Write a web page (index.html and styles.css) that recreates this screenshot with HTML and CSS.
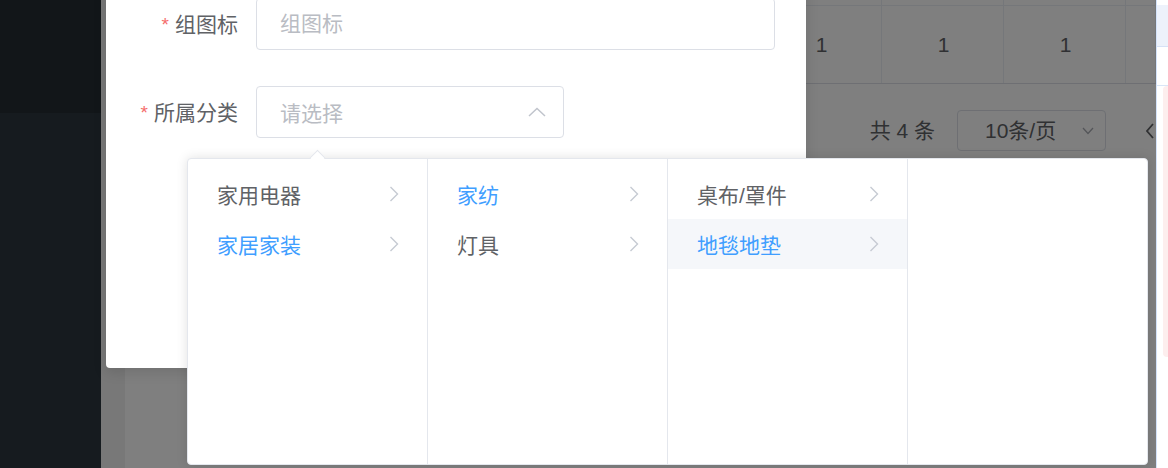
FILE: index.html
```html
<!DOCTYPE html>
<html lang="zh-CN">
<head>
  <meta charset="UTF-8">
  <title>分组管理</title>
  <link rel="stylesheet" href="styles.css">
</head>
<body>
<div class="app">
  <aside class="sidebar"><div class="sidebar-head"></div></aside>

  <main class="main">
    <div class="content">
      <div class="table">
        <div class="tr th">
          <div class="td"></div><div class="td"></div><div class="td"></div><div class="td"></div><div class="td"></div>
        </div>
        <div class="tr">
          <div class="td"></div><div class="td">1</div><div class="td">1</div><div class="td">1</div><div class="td"></div>
        </div>
      </div>
      <div class="pager">
        <span class="total">共 4 条</span>
        <div class="sizes">
          <span>10条/页</span>
          <svg width="12" height="8" viewBox="0 0 12 8"><polyline points="1,1 6,6.5 11,1" fill="none" stroke="#a8abb2" stroke-width="1.3"/></svg>
        </div>
        <button class="prev">
          <svg width="8" height="16" viewBox="0 0 8 16"><polyline points="7,1 1,8 7,15" fill="none" stroke="#606266" stroke-width="1.8"/></svg>
        </button>
      </div>
    </div>
    <!-- 弹窗遮罩 -->
    <div class="mask"></div>
  </main>

  <div class="edge">
    <div class="edge-band"></div>
    <div class="edge-row"></div>
    <div class="edge-alert"></div>
  </div>
</div>

<!-- 添加分组弹窗 -->
<div class="dialog">
  <div class="form-item">
    <label class="label"><span class="req">*</span>组图标</label>
    <input class="input" placeholder="组图标">
  </div>
  <div class="form-item">
    <label class="label"><span class="req">*</span>所属分类</label>
    <div class="select">
      <span class="placeholder">请选择</span>
      <svg width="18" height="10" viewBox="0 0 18 10"><polyline points="1,9 9,1.5 17,9" fill="none" stroke="#c0c4cc" stroke-width="1.5"/></svg>
    </div>
  </div>
</div>

<!-- 级联下拉 -->
<div class="cascader">
  <span class="popper-arrow"></span>
  <ul class="menu">
    <li class="node">家用电器<svg class="chev" width="10" height="16" viewBox="0 0 10 16"><polyline points="1.5,1 8.5,8 1.5,15" fill="none" stroke="#c6cbd3" stroke-width="1.4"/></svg></li>
    <li class="node active">家居家装<svg class="chev" width="10" height="16" viewBox="0 0 10 16"><polyline points="1.5,1 8.5,8 1.5,15" fill="none" stroke="#c6cbd3" stroke-width="1.4"/></svg></li>
  </ul>
  <ul class="menu">
    <li class="node active">家纺<svg class="chev" width="10" height="16" viewBox="0 0 10 16"><polyline points="1.5,1 8.5,8 1.5,15" fill="none" stroke="#c6cbd3" stroke-width="1.4"/></svg></li>
    <li class="node">灯具<svg class="chev" width="10" height="16" viewBox="0 0 10 16"><polyline points="1.5,1 8.5,8 1.5,15" fill="none" stroke="#c6cbd3" stroke-width="1.4"/></svg></li>
  </ul>
  <ul class="menu">
    <li class="node">桌布/罩件<svg class="chev" width="10" height="16" viewBox="0 0 10 16"><polyline points="1.5,1 8.5,8 1.5,15" fill="none" stroke="#c6cbd3" stroke-width="1.4"/></svg></li>
    <li class="node active hover">地毯地垫<svg class="chev" width="10" height="16" viewBox="0 0 10 16"><polyline points="1.5,1 8.5,8 1.5,15" fill="none" stroke="#c6cbd3" stroke-width="1.4"/></svg></li>
  </ul>
  <ul class="menu last"></ul>
</div>
</body>
</html>
```

FILE: styles.css
```css
    body {
      margin: 0;
      width: 1168px;
      height: 468px;
      overflow: hidden;
      font-family: "Liberation Sans", "Noto Sans CJK SC", sans-serif;
      color: #606266;
    }
    .app {
      display: flex;
      height: 468px;
    }
    .sidebar {
      width: 101px;
      flex: none;
      background: #161b1f;
    }
    .sidebar-head {
      height: 113px;
      background: #121619;
    }
    .main {
      flex: 1;
      position: relative;
      display: flex;
      padding-left: 24px;
      background: #f0f0f0;
      overflow: hidden;
    }
    .content {
      flex: 1;
      background: #fff;
    }
    .mask {
      position: absolute;
      top: 0;
      left: 0;
      right: 0;
      bottom: 0;
      background: rgba(0, 0, 0, 0.5);
    }

    /* 表格 */
    .table {
      margin-top: -43px;
    }
    .tr {
      display: grid;
      grid-template-columns: 635px 122px 122px 122px 1fr;
      height: 77px;
      border-bottom: 1px solid #dcdfe6;
    }
    .tr.th {
      height: 48px;
      border-bottom: 1px solid #ebeef5;
    }
    .td {
      display: flex;
      align-items: center;
      justify-content: center;
      padding-left: 2px;
      border-right: 1px solid #ebeef5;
      font-size: 21px;
    }

    /* 分页 */
    .pager {
      display: flex;
      align-items: center;
      justify-content: flex-end;
      height: 41px;
      margin-top: 26px;
      margin-right: -14px;
      font-size: 21px;
      line-height: 1;
    }
    .total {
      margin-right: 22px;
    }
    .sizes {
      width: 149px;
      height: 41px;
      box-sizing: border-box;
      display: flex;
      align-items: center;
      justify-content: space-between;
      padding: 0 11px 0 27px;
      border: 1px solid #dcdfe6;
      border-radius: 4px;
    }
    .prev {
      width: 40px;
      height: 41px;
      margin-left: 24px;
      padding: 0;
      border: none;
      background: none;
      display: flex;
      align-items: center;
      justify-content: center;
    }

    /* 右侧边缘 */
    .edge {
      width: 12px;
      flex: none;
      box-sizing: border-box;
      border-left: 1px solid #d4e3fa;
      background: #fff;
      padding-top: 5px;
    }
    .edge-band {
      height: 41px;
      background: #edf2fb;
      border-bottom: 1px solid #d6e2f6;
    }
    .edge-row {
      height: 38px;
      border-bottom: 1px solid #d9e6f7;
    }
    .edge-alert {
      height: 271px;
      margin-left: 6px;
      background: #fdeeee;
      border-radius: 4px 0 0 4px;
    }

    /* 弹窗 */
    .dialog {
      position: absolute;
      left: 106px;
      top: -30px;
      width: 700px;
      height: 398px;
      box-sizing: border-box;
      padding-top: 28px;
      background: #fff;
      border-radius: 4px;
      box-shadow: 0 4px 14px rgba(0, 0, 0, 0.12);
    }
    .form-item {
      display: flex;
      align-items: center;
      height: 52px;
      margin-bottom: 36px;
    }
    .label {
      width: 150px;
      height: 52px;
      box-sizing: border-box;
      display: flex;
      align-items: center;
      justify-content: flex-end;
      padding-right: 18px;
      font-size: 21px;
      line-height: 1;
      color: #606266;
    }
    .req {
      color: #f56c6c;
      margin-right: 6px;
      font-size: 19px;
    }
    .input {
      width: 519px;
      height: 52px;
      box-sizing: border-box;
      padding: 0 23px;
      border: 1px solid #dcdfe6;
      border-radius: 4px;
      font-family: "Liberation Sans", "Noto Sans CJK SC", sans-serif;
      font-size: 21px;
      color: #606266;
      outline: none;
    }
    .input::placeholder {
      color: #b9bcc3;
    }
    .select {
      width: 308px;
      height: 52px;
      box-sizing: border-box;
      display: flex;
      align-items: center;
      justify-content: space-between;
      padding: 0 17px 0 23px;
      border: 1px solid #dcdfe6;
      border-radius: 4px;
      font-size: 21px;
    }
    .placeholder {
      color: #b9bcc3;
    }

    /* 级联面板 */
    .cascader {
      position: absolute;
      left: 187px;
      top: 158px;
      width: 961px;
      height: 307px;
      box-sizing: border-box;
      display: flex;
      background: #fff;
      border: 1px solid #e4e7ed;
      border-radius: 4px;
      box-shadow: 0 0 12px rgba(0, 0, 0, 0.12);
    }
    .popper-arrow {
      position: absolute;
      top: -7px;
      left: 124px;
      width: 10px;
      height: 10px;
      background: #fff;
      border-top: 1px solid #e4e7ed;
      border-left: 1px solid #e4e7ed;
      transform: rotate(45deg);
    }
    .menu {
      width: 240px;
      flex: none;
      box-sizing: border-box;
      margin: 0;
      padding: 10px 0;
      list-style: none;
      border-right: 1px solid #e4e7ed;
    }
    .menu.last {
      flex: 1;
      border-right: none;
    }
    .node {
      display: flex;
      align-items: center;
      justify-content: space-between;
      height: 50px;
      padding: 0 28px 0 29px;
      font-size: 21px;
      color: #606266;
    }
    .node.active {
      color: #409eff;
    }
    .node.hover {
      background: #f5f7fa;
    }
```
